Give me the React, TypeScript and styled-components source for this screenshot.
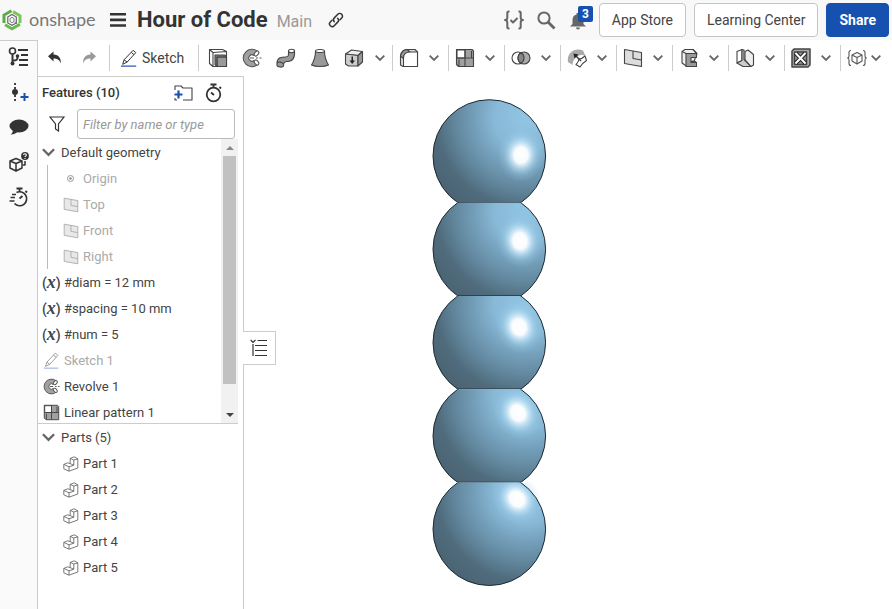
import React from "react";
import styled, { createGlobalStyle } from "styled-components";

const Global = createGlobalStyle`
  * { box-sizing: border-box; }
  html, body, #root { height: 100%; }
  body { margin: 0; background: #fff; color: #333; font: 14px/20px Roboto, "Liberation Sans", sans-serif; overflow: hidden; }
  button { font: inherit; color: inherit; background: none; border: 0; padding: 0; display: flex; align-items: center; justify-content: center; cursor: pointer; }
  ul { list-style: none; margin: 0; padding: 0; }
  svg { display: block; flex: none; }
`;

const Page = styled.div`
  display: flex;
  flex-direction: column;
  height: 100vh;
`;
const Header = styled.header`
  display: flex;
  align-items: center;
  height: 40px;
  flex: none;
  padding: 0 3px 0 2px;
  background: #f8f8f8;
`;
const Brand = styled.a`
  display: flex;
  align-items: center;
  gap: 7px;
  width: 108px;
  color: #777;
  font: 18px/20px Lato, sans-serif;
  text-decoration: none;
  span { padding-bottom: 2px; }
`;
const Title = styled.h1`
  margin: 0 0 0 11px;
  font-size: 22px;
  line-height: 28px;
  font-weight: 700;
`;
const Branch = styled.span`
  margin: 4px 16px 0 9px;
  font-size: 16px;
  color: #999;
`;
const HeaderActions = styled.div`
  display: flex;
  align-items: center;
  gap: 8px;
  margin-left: auto;
`;
const HeaderIcons = styled.div`
  display: flex;
  align-items: center;
  gap: 12px;
  margin-right: 3px;
`;
const Bell = styled.button`
  position: relative;
`;
const Badge = styled.span`
  position: absolute;
  left: 10px;
  top: -4px;
  width: 15px;
  height: 16px;
  border-radius: 2px;
  background: #1651b0;
  color: #fff;
  font-size: 12px;
  line-height: 16px;
  font-weight: 700;
`;
const ActionButton = styled.button<{ $primary?: boolean }>`
  && {
    height: 34px;
    padding: 0 12px;
    border: 1px solid ${(p) => (p.$primary ? "#1651b0" : "#c4c4c4")};
    border-radius: 4px;
    background: ${(p) => (p.$primary ? "#1651b0" : "#fff")};
    color: ${(p) => (p.$primary ? "#fff" : "#444")};
    font-weight: ${(p) => (p.$primary ? 700 : 400)};
  }
`;

const Body = styled.div`
  display: flex;
  flex: 1;
  min-height: 0;
`;
const Rail = styled.nav`
  display: flex;
  flex-direction: column;
  align-items: center;
  gap: 11px;
  width: 38px;
  flex: none;
  padding-top: 4px;
  background: #fafafa;
  border-top: 1px solid #ccc;
  border-right: 1px solid #ccc;
`;
const RailButton = styled.button`
  width: 24px;
  height: 24px;
`;
const Main = styled.main`
  display: flex;
  flex-direction: column;
  flex: 1;
  min-width: 0;
`;
const Toolbar = styled.div`
  display: flex;
  align-items: center;
  height: 36px;
  flex: none;
  padding: 0 4px;
`;
const ToolGroup = styled.div<{ $pad?: string }>`
  display: flex;
  align-items: center;
  height: 26px;
  padding: ${(p) => p.$pad || "0"};
  & + & { border-left: 1px solid #ccc; }
`;
const Tool = styled.button<{ $w?: number }>`
  width: ${(p) => p.$w || 34}px;
  height: 26px;
`;
const SketchTool = styled.button`
  && {
    width: 88px;
    height: 26px;
    justify-content: flex-start;
    gap: 4px;
    padding-left: 10px;
    color: #444;
  }
`;
const Workspace = styled.div`
  display: flex;
  flex: 1;
  min-height: 0;
`;
const Panel = styled.aside`
  display: flex;
  flex-direction: column;
  width: 206px;
  flex: none;
  border-top: 1px solid #ccc;
  border-right: 1px solid #ccc;
`;
const PanelHead = styled.div`
  display: flex;
  align-items: center;
  height: 32px;
  flex: none;
  padding: 0 20px 0 4px;
  gap: 10px;
  h2 { flex: 1; margin: 0; font-size: 13px; font-weight: 500; }
`;
const FilterRow = styled.div`
  display: flex;
  align-items: center;
  gap: 12px;
  height: 30px;
  flex: none;
  padding: 0 8px 0 11px;
`;
const FilterInput = styled.input`
  flex: 1;
  min-width: 0;
  height: 30px;
  padding: 0 5px;
  border: 1px solid #bbb;
  border-radius: 3px;
  font: italic 13px/20px Roboto, sans-serif;
  &::placeholder { color: #999; opacity: 1; }
`;
const FeatureArea = styled.div`
  display: flex;
  height: 285px;
  flex: none;
  margin-right: 5px;
  border-bottom: 1px solid #ccc;
`;
const Tree = styled.div`
  flex: 1;
  overflow: hidden;
`;
const Row = styled.button<{ $indent?: number; $muted?: boolean; $gap?: number }>`
  && {
    width: 100%;
    height: 26px;
    padding-top: 1px;
    justify-content: flex-start;
    gap: ${(p) => p.$gap || 4}px;
    padding-left: ${(p) => p.$indent || 5}px;
    color: ${(p) => (p.$muted ? "#aaa" : "#444")};
    font-size: 13px;
    white-space: nowrap;
  }
`;
const Children = styled.ul`
  margin-left: 9px;
  border-left: 1px solid #bbb;
`;
const VariableMark = styled.span`
  width: 18px;
  height: 22px;
  font: italic 700 18px/20px "Liberation Serif", serif;
  text-align: center;
  b { font-style: normal; font-weight: 500; font-family: Roboto, sans-serif; font-size: 14px; }
`;
const ScrollTrack = styled.div`
  display: flex;
  flex-direction: column;
  align-items: center;
  width: 17px;
  background: #f1f1f1;
`;
const ScrollThumb = styled.div`
  width: 13px;
  height: 228px;
  background: #c1c1c1;
`;
const ScrollButton = styled.button`
  width: 17px;
  height: 17px;
  flex: none;
  &:last-child { margin-top: auto; }
`;
const ViewArea = styled.section`
  position: relative;
  display: flex;
  flex: 1;
  min-width: 0;
`;
const Flyout = styled.button`
  && {
    position: absolute;
    left: -1px;
    top: 255px;
    width: 33px;
    height: 34px;
    border: 1px solid #ccc;
    border-left: 0;
    background: #fff;
  }
`;
const Canvas = styled.div`
  padding: 21px 0 0 186px;
`;

const D = "#333";
const G = "#999";

type IconProps = { s?: number; c?: string; children: React.ReactNode };
const Icon = ({ s = 20, c = "#444", children }: IconProps) => (
  <svg width={s} height={s} viewBox="0 0 20 20" fill="none" stroke={c} strokeWidth="1.1" strokeLinejoin="round" aria-hidden="true">
    {children}
  </svg>
);

const Chevron = ({ w = 10 }: { w?: number }) => (
  <svg width={w} height={w * 0.8} viewBox="0 0 10 8" fill="none" stroke="#666" strokeWidth="1.8" aria-hidden="true">
    <path d="M.7 1.7L5 6l4.3-4.3" />
  </svg>
);
const Logo = () => (
  <svg width="20" height="22" viewBox="0 0 20 22" fill="none" aria-hidden="true">
    <path d="M9.5 1.7L2 6v8" stroke="#59ad45" strokeWidth="3" />
    <path d="M11 2.6l7 4.2V14" stroke="#7ac85c" strokeWidth="3" />
    <path d="M18 15.3l-8 4.5-7-4" stroke="#68b94c" strokeWidth="2.8" />
    <path d="M5.8 8L10 5.5 14.3 8v6L10 16.3 5.8 14z" stroke="#666" strokeWidth="1.2" fill="#fff" />
    <path d="M8 9.5l2-1.2 2 1.2v3l-2 1.2-2-1.2zM12.5 13l3 2" stroke="#777" />
  </svg>
);
const Menu = () => (
  <svg width="16" height="16" viewBox="0 0 16 16" fill="#333" aria-hidden="true">
    <path d="M0 1h16v2.6H0zM0 6.6h16v2.6H0zM0 12.2h16v2.6H0z" />
  </svg>
);
const Link = () => (
  <svg width="16" height="16" viewBox="0 0 16 16" fill="none" stroke="#333" strokeWidth="1.5" strokeLinecap="round" aria-hidden="true">
    <path d="M6.3 9.7a2.7 2.7 0 0 1 0-3.8l3.5-3.6a2.7 2.7 0 0 1 3.9 3.8L12 7.8" />
    <path d="M9.7 6.3a2.7 2.7 0 0 1 0 3.8l-3.5 3.6a2.7 2.7 0 0 1-3.9-3.8L4 8.2" />
  </svg>
);
const Braces = () => (
  <Icon c="#666">
    <path strokeWidth="2" d="M5.5 1.5H4.8Q3.3 1.5 3.3 3v4.5Q3.3 10 1 10q2.3 0 2.3 2.5V17q0 1.5 1.5 1.5h.7M14.5 1.5h.7q1.5 0 1.5 1.5v4.5q0 2.5 2.3 2.5-2.3 0-2.3 2.5V17q0 1.5-1.5 1.5h-.7M6.5 10l2.5 2.5L13.5 8" />
  </Icon>
);
const Search = () => (
  <Icon c="#666">
    <circle cx="8" cy="8" r="5.6" strokeWidth="2" />
    <path d="M12 12l6.5 6.5" strokeWidth="2.8" />
  </Icon>
);
const BellIcon = () => (
  <Icon c="none">
    <path fill="#666" d="M2 16.5h16L15.5 14v-4c0-3-1.5-5-4-5.5V3h-3v1.5C6 5 4.5 7 4.5 10v4zM8 17.5h4c0 2.5-4 2.5-4 0z" />
  </Icon>
);
const Undo = ({ flip }: { flip?: boolean }) => (
  <svg width="14" height="14" viewBox="0 0 14 14" fill={flip ? G : D} aria-hidden="true">
    <path d={flip ? "M14 5.3L8.5.5v3C3 4 1 7 1.2 12.5 2.6 8.7 5 7.5 8.5 7.5v3z" : "M0 5.3L5.5.5v3C11 4 13 7 12.8 12.5 11.4 8.7 9 7.5 5.5 7.5v3z"} />
  </svg>
);
const SketchIcon = ({ s = 18, muted }: { s?: number; muted?: boolean }) => (
  <Icon s={s} c={muted ? G : D}>
    <path d="M3 17l1.5-5L14.5 1.5l3 2.5L8 14.5zM4.5 12L8 14.5M12.5 3.8l3 2.5" />
    <path d="M1 19h17" stroke={muted ? "#9db4dd" : "#1651b0"} strokeWidth="1.3" />
  </Icon>
);
const Extrude = () => (
  <Icon>
    <path fill="#fff" d="M1.5 1.5h13l4 2v15H5l-3.5-3zM1.5 1.5L5 4.5l13.5-1M5 4.5v14" />
    <path fill={G} d="M9 9h9.5v9.5H9z" />
    <path fill="#777" d="M7 7h10l1.5 2H9v9.5L7 16.5z" />
  </Icon>
);
const Revolve = ({ s = 20 }: { s?: number }) => (
  <Icon s={s} c="#555">
    <path fill="#a0a0a0" d="M15.5 3.3A8.7 8.7 0 1 0 15.5 16.7L12 12.5A3.2 3.2 0 1 1 12 7.5z" />
    <ellipse fill="#fff" cx="14.5" cy="5.5" rx="2.8" ry="1.8" transform="rotate(-50 14.5 5.5)" />
    <ellipse fill="#fff" cx="14.5" cy="14.5" rx="2.8" ry="1.8" transform="rotate(50 14.5 14.5)" />
    <path d="M8 10h4M14 10h2M17.5 10h2" />
  </Icon>
);
const Sweep = () => (
  <Icon>
    <path fill={G} d="M1 14.5C1.5 9 6 9 9.5 9c3.5 0 3-2 3-5.5l6-.5c.5 6-1 10-6.5 10.5-3 .3-4.5 0-4.5 4.5-1 2-6 1-6.5-.5z" />
    <ellipse fill="#fff" cx="15.5" cy="3" rx="3" ry="1.7" />
    <path d="M1 15c2-1.5 5-1.2 6.5 1" />
  </Icon>
);
const Loft = () => (
  <Icon>
    <path fill={G} d="M5.5 3C5.5 8 4 13 1.5 17c4 2 13 2 17 0C16 13 14.5 8 14.5 3z" />
    <ellipse fill="#fff" cx="10" cy="3" rx="4.5" ry="1.5" />
  </Icon>
);
const Thicken = () => (
  <Icon>
    <path fill="#eee" d="M1.5 6l6-4 11 1.5-4.5 4z" />
    <path fill="#ccc" d="M1.5 6L14 7.5V18H4.5l-3-2z" />
    <path fill={G} d="M14 7.5l4.5-4V14L14 18z" />
    <path stroke="none" fill="#222" d="M7.5 8.500h1.500v4h2L8.200 16l-2.700-3.500h2z" />
  </Icon>
);
const Fillet = () => (
  <Icon>
    <path fill="#ddd" d="M1.5 17V8C2 4 5 1.5 8 1.5h8L18.5 4v14.5H4z" />
    <path fill={G} d="M1.5 8C2 4 5 1.5 8 1.5L11 4C7 4 4.5 7 4.5 10.5z" />
    <path fill="#fff" d="M4.5 18.5V10c0-4 2.5-6 7-6h7v14.5z" />
  </Icon>
);
const Pattern = ({ s = 20 }: { s?: number }) => (
  <Icon s={s}>
    <path fill="#a0a0a0" d="M1.500 1.500H17L18.500 3v15.500h-15l-2-2z" />
    <path fill="#fff" d="M2 2h8v8H2z" />
    <path d="M10 1.500v17M1.500 10h17M4 18V11.500M16.500 3v6.500" />
  </Icon>
);
const BooleanIcon = () => (
  <Icon>
    <circle cx="7" cy="10" r="6" fill="#fff" />
    <circle cx="13" cy="10" r="6" fill="#aaa" />
    <path fill="#888" d="M10 4.8a6 6 0 0 1 0 10.4a6 6 0 0 1 0-10.4z" />
  </Icon>
);
const MoveFace = () => (
  <Icon>
    <path stroke="none" fill="#aaa" d="M1 14C-.5 6 7-1 16 2.5L18.5 8C12 5 6 10 5.5 17z" />
    <path fill="#fff" d="M9 16.5c2-1.5 2.5-2.8 3-5.5 2 0 4-1 6-3l1.5 4.5C17 14 15 16 13 19z" />
    <path strokeWidth="1.6" d="M14 13L8 7" />
    <path stroke="none" fill="#222" d="M6.5 5.5l5 1-4 4z" />
  </Icon>
);
const Plane = ({ s = 20, muted }: { s?: number; muted?: boolean }) => (
  <Icon s={s} c={muted ? "#aaa" : "#444"}>
    <path fill={muted ? "#e8e8e8" : "#ddd"} d="M1.5 1.5l17 3v14l-17-3z" />
    <path d="M10 3v7.5l8.5 1.5" />
  </Icon>
);
const Frame = () => (
  <Icon>
    <path fill="#eee" d="M3 3.5l3-2h8l4 4-3 8H8v5l-5-3.5z" />
    <path fill={G} d="M7 5.5h10.5v4H12v5h5.5v4H7z" />
    <path d="M3 3.5l4 2M14 1.5l3.5 4M12 14.5l2-1.5h1.5l2 1.5" />
  </Icon>
);
const SheetMetal = () => (
  <Icon>
    <path fill="#fff" d="M2 3.5l5-2v11L2 15z" />
    <path fill="#ccc" d="M7 1.5l2 .5v9.5l7 7H8L2 15l5-2.5z" />
    <path fill="#eee" d="M10 3.5l3-1.5 5.5 4.5V17L16 18.5l-6-7z" />
  </Icon>
);
const Structure = () => (
  <Icon>
    <path fill="#aaa" strokeWidth="1.5" d="M1 3l2-2h16v16l-2 2H1z" />
    <path fill="#999" strokeWidth="1.5" d="M3.5 4h12v12.5h-12z" />
    <path stroke="#222" strokeWidth="4" d="M4.5 5l10 10.5M14.5 5l-10 10.5" />
    <path stroke="#fff" strokeWidth="2" d="M4.5 5l10 10.5M14.5 5l-10 10.5" />
  </Icon>
);
const CustomCube = () => (
  <Icon c="#555">
    <path d="M4 2.5Q2 2.5 2 4.5V8q0 2-1.5 2 1.5 0 1.5 2v3.5q0 2 2 2M16 2.5q2 0 2 2V8q0 2 1.5 2-1.5 0-1.5 2v3.5q0 2-2 2" />
    <path d="M10 4.5L15 7v6l-5 3-5-3V7zM5 7l5 2.5L15 7M10 9.5V16" />
  </Icon>
);
const TreeIcon = () => (
  <svg width="22" height="20" viewBox="0 0 22 20" fill="none" stroke="#333" strokeWidth="2" aria-hidden="true">
    <circle cx="4.5" cy="4" r="3" strokeWidth="1.6" />
    <circle cx="4.5" cy="16.5" r="2" fill="#333" stroke="none" />
    <path d="M4.5 7v9M4.5 13.5c5 0 5-1 5-4M10 3h10M13 8h7M11 13h9M11 18h9" />
    <circle cx="9.5" cy="9" r="1.8" fill="#333" stroke="none" />
  </svg>
);
const Insert = () => (
  <Icon>
    <path strokeDasharray="2 2" strokeWidth="2" d="M6 1v18" />
    <circle cx="6" cy="10" r="3" fill={D} stroke="none" />
    <path stroke="#1651b0" strokeWidth="2" d="M11.5 15h8M15.5 11v8" />
  </Icon>
);
const Comment = () => (
  <Icon c="none">
    <ellipse cx="10" cy="9" rx="9.5" ry="6.5" fill={D} />
    <path fill={D} d="M4 12c0 3-.5 4-2.5 5.5 4 0 6-1.5 7.5-3z" />
  </Icon>
);
const CubeHelp = () => (
  <Icon c={D}>
    <path strokeWidth="1.5" d="M1 9l6-2.5L13 9v7l-6 3-6-3zM1 9l6 2.5L13 9M7 11.5V19M14 13h2V9" />
    <circle cx="16" cy="4" r="3.9" fill={D} stroke="none" />
    <path stroke="#fff" d="M14.6 3c0-2 3-1.5 2.7.2C17.2 4 16 4 16 5M16 6v1" />
  </Icon>
);
const Stopwatch = ({ fast }: { fast?: boolean }) => (
  <Icon c={D}>
    <path strokeWidth="1.8" d={fast ? "M7.5 1.5h6M10.5 2v3M16.5 4L18 5.5M10.5 11.5l3-2.5" : "M7.5 1.5h6M10.5 2v3M16.5 4L18 5.5M8 9.5l3 2.5"} />
    {fast ? (
      <path strokeWidth="1.7" d="M7.5 5.5a7 7 0 1 1-2 11M3 7.5h4M1.5 10.5H6M.5 14h5" />
    ) : (
      <circle cx="10.5" cy="11.5" r="6.8" strokeWidth="1.8" />
    )}
  </Icon>
);
const Folder = () => (
  <Icon>
    <path d="M2 7V3h6l2 2h9v12H10M2 15v2h2" />
    <path stroke="#1651b0" strokeWidth="2.2" d="M1.5 11.5h8M5.5 7.5v8" />
  </Icon>
);
const Funnel = () => (
  <svg width="16" height="16" viewBox="0 0 16 16" fill="none" stroke="#333" strokeWidth="1.2" aria-hidden="true">
    <path d="M1 1h14L9.5 8v7l-3-2V8z" />
  </svg>
);
const Origin = () => (
  <svg width="15" height="15" viewBox="0 0 15 15" fill="none" stroke="#999" aria-hidden="true">
    <circle cx="7.5" cy="7.5" r="3" />
    <circle cx="7.5" cy="7.5" r="1.2" fill="#888" stroke="none" />
  </svg>
);
const PartIcon = () => (
  <Icon s={16} c="#666">
    <path fill="#fff" d="M1 10.5l5-2 3 1V3l5-2 4.500 2.500V15L7.500 19 1 16z" />
    <path d="M1 10.500L7.500 13.500 13.500 11.500V5L9 3M13.500 5l5-1.500M7.500 13.500V19M9 9.500l4.500 2" />
  </Icon>
);
const ListIcon = () => (
  <svg width="18" height="18" viewBox="0 0 18 18" fill="none" stroke="#333" strokeWidth="1.2" aria-hidden="true">
    <path d="M.7 1L3 3.5 5.500 1M3 5v12M7.500 1.500H17M5 6.500h12M5 11.500h12M5 16.500h12" />
  </svg>
);
const Arrow = ({ down }: { down?: boolean }) => (
  <svg width="8" height="4" viewBox="0 0 8 4" fill={down ? "#444" : "#888"} aria-hidden="true">
    <path d={down ? "M0 0h8L4 4z" : "M0 4h8L4 0z"} />
  </svg>
);

const RADIUS = 56.3;
const PITCH = 93.3;
const beads = [0, 1, 2, 3, 4];

const Model = () => (
  <svg width="118" height="490" viewBox="430 97 118 490" role="img" aria-label="Stack of five intersecting spheres">
    <defs>
      {beads.map((i) => {
        const cy = 156 + PITCH * i;
        return (
          <React.Fragment key={i}>
            <clipPath id={`cut${i}`}>
              <rect x="430" y={i === 0 ? 90 : cy - PITCH / 2} width="118" height={i === 0 ? 66 + PITCH / 2 : i === 4 ? 120 : PITCH} />
            </clipPath>
            <radialGradient id={`body${i}`} gradientUnits="userSpaceOnUse" cx="526" cy={cy - 38} r="114">
              <stop offset="0" stopColor="#92c5e4" />
              <stop offset=".28" stopColor="#88b9d7" />
              <stop offset=".45" stopColor="#749fba" />
              <stop offset=".63" stopColor="#61869c" />
              <stop offset=".79" stopColor="#4f6b7c" />
              <stop offset="1" stopColor="#4a6271" />
            </radialGradient>
            <radialGradient id={`shine${i}`}>
              <stop offset="0" stopColor="#fff" />
              <stop offset=".3" stopColor="#fff" stopOpacity=".95" />
              <stop offset=".5" stopColor="#d6f0ff" stopOpacity=".6" />
              <stop offset=".75" stopColor="#a8d6f0" stopOpacity=".25" />
              <stop offset="1" stopColor="#9dcdea" stopOpacity="0" />
            </radialGradient>
          </React.Fragment>
        );
      })}
    </defs>
    {beads.map((i) => {
      const cy = 156 + PITCH * i;
      const sx = 521 - i;
      const sy = 155 + 86 * i;
      return (
        <g key={i} clipPath={`url(#cut${i})`}>
          <circle cx="489.3" cy={cy} r={RADIUS} fill={`url(#body${i})`} />
          <ellipse cx={sx} cy={sy} rx="23" ry="27" fill={`url(#shine${i})`} transform={`rotate(${-10 * i} ${sx} ${sy})`} />
          <circle cx="489.3" cy={cy} r={RADIUS} stroke="#1c2a33" fill="none" />
          {i < 4 && <path d={`M458 ${cy + PITCH / 2}h63`} stroke="#253540" strokeWidth="1.5" />}
        </g>
      );
    })}
  </svg>
);

const groups = [
  { name: "Fillet", icon: <Fillet /> },
  { name: "Linear pattern", icon: <Pattern /> },
  { name: "Boolean", icon: <BooleanIcon /> },
  { name: "Move face", icon: <MoveFace /> },
  { name: "Plane", icon: <Plane /> },
  { name: "Frame", icon: <Frame /> },
  { name: "Sheet metal", icon: <SheetMetal /> },
  { name: "Structure", icon: <Structure /> },
];

export default function App() {
  return (
    <Page>
      <Global />
      <Header>
        <Brand href="#"><Logo /><span>onshape</span></Brand>
        <button aria-label="Document menu"><Menu /></button>
        <Title>Hour of Code</Title>
        <Branch>Main</Branch>
        <button aria-label="Copy link"><Link /></button>
        <HeaderActions>
          <HeaderIcons>
            <button aria-label="Feature scripts"><Braces /></button>
            <button aria-label="Search"><Search /></button>
            <Bell aria-label="Notifications"><BellIcon /><Badge>3</Badge></Bell>
          </HeaderIcons>
          <ActionButton>App Store</ActionButton>
          <ActionButton>Learning Center</ActionButton>
          <ActionButton $primary>Share</ActionButton>
        </HeaderActions>
      </Header>
      <Body>
        <Rail>
          <RailButton aria-label="Feature list"><TreeIcon /></RailButton>
          <RailButton aria-label="Insert"><Insert /></RailButton>
          <RailButton aria-label="Comments"><Comment /></RailButton>
          <RailButton aria-label="Part help"><CubeHelp /></RailButton>
          <RailButton aria-label="Performance"><Stopwatch fast /></RailButton>
        </Rail>
        <Main>
          <Toolbar>
            <ToolGroup>
              <Tool $w={26} aria-label="Undo"><Undo /></Tool>
              <Tool $w={41} aria-label="Redo"><Undo flip /></Tool>
            </ToolGroup>
            <ToolGroup><SketchTool><SketchIcon />Sketch</SketchTool></ToolGroup>
            <ToolGroup $pad="0 4px 0 2px">
              <Tool aria-label="Extrude"><Extrude /></Tool>
              <Tool aria-label="Revolve"><Revolve /></Tool>
              <Tool aria-label="Sweep"><Sweep /></Tool>
              <Tool aria-label="Loft"><Loft /></Tool>
              <Tool aria-label="Thicken"><Thicken /></Tool>
              <Tool $w={17} aria-label="More solid tools"><Chevron /></Tool>
            </ToolGroup>
            {groups.map((g) => (
              <ToolGroup key={g.name} $pad="0 6px 0 0">
                <Tool $w={32} aria-label={g.name}>{g.icon}</Tool>
                <Tool $w={17} aria-label={`More ${g.name}`}><Chevron /></Tool>
              </ToolGroup>
            ))}
            <ToolGroup $pad="0 0 0 4px">
              <Tool $w={24} aria-label="Custom features"><CustomCube /></Tool>
              <Tool $w={14} aria-label="More custom features"><Chevron /></Tool>
            </ToolGroup>
          </Toolbar>
          <Workspace>
            <Panel>
              <PanelHead>
                <h2>Features (10)</h2>
                <button aria-label="New folder"><Folder /></button>
                <button aria-label="Regeneration times"><Stopwatch /></button>
              </PanelHead>
              <FilterRow>
                <Funnel />
                <FilterInput aria-label="Filter by name or type" placeholder="Filter by name or type" />
              </FilterRow>
              <FeatureArea>
                <Tree>
                  <Row $gap={6} $indent={4}><Chevron w={13} />Default geometry</Row>
                  <Children>
                    <li><Row $muted $indent={15} $gap={5}><Origin />Origin</Row></li>
                    {["Top", "Front", "Right"].map((n) => (
                      <li key={n}><Row $muted $indent={15}><Plane s={16} muted />{n}</Row></li>
                    ))}
                  </Children>
                  {["#diam = 12 mm", "#spacing = 10 mm", "#num = 5"].map((n) => (
                    <Row key={n} $indent={4}><VariableMark><b>(</b>x<b>)</b></VariableMark>{n}</Row>
                  ))}
                  <Row $muted><SketchIcon s={17} muted />Sketch 1</Row>
                  <Row><Revolve s={17} />Revolve 1</Row>
                  <Row><Pattern s={17} />Linear pattern 1</Row>
                </Tree>
                <ScrollTrack>
                  <ScrollButton aria-label="Scroll up"><Arrow /></ScrollButton>
                  <ScrollThumb />
                  <ScrollButton aria-label="Scroll down"><Arrow down /></ScrollButton>
                </ScrollTrack>
              </FeatureArea>
              <Row $gap={6} $indent={4}><Chevron w={13} />Parts (5)</Row>
              <ul>
                {[1, 2, 3, 4, 5].map((n) => (
                  <li key={n}><Row $indent={25}><PartIcon />Part {n}</Row></li>
                ))}
              </ul>
            </Panel>
            <ViewArea>
              <Flyout aria-label="Configuration list"><ListIcon /></Flyout>
              <Canvas><Model /></Canvas>
            </ViewArea>
          </Workspace>
        </Main>
      </Body>
    </Page>
  );
}
